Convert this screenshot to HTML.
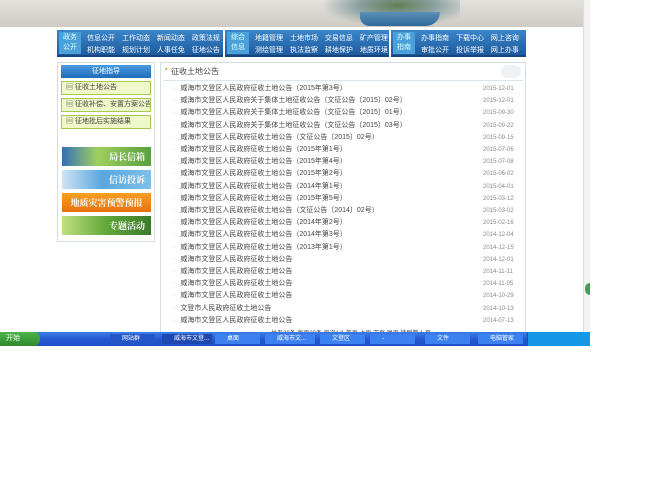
<!DOCTYPE html>
<html><head><meta charset="utf-8"><style>
*{margin:0;padding:0;box-sizing:border-box}
body{width:656px;height:492px;background:#fff;position:relative;overflow:hidden;font-family:"Liberation Sans","Noto Sans CJK SC",sans-serif;font-size:7px;color:#444}
.abs{position:absolute}
.banner{left:0;top:0;width:583px;height:27px;background:linear-gradient(#e4e2de,#cfcbc4)}
.nav{top:30px;height:27px;background:linear-gradient(#3b86c9,#1d5a9e);border-bottom:2px solid #17457a}
.nav .h{position:absolute;left:2px;top:2px;width:22px;height:22px;background:#4aa0d8;color:#dff;font-size:7px;line-height:10px;text-align:center;padding-top:1px}
.nav .l{position:absolute;left:30px;color:#fff;font-size:7px;white-space:nowrap;word-spacing:5px}
.side{left:57px;top:62px;width:98px;height:180px;border:1px solid #d6dde4}
.st{position:absolute;left:3px;top:2px;width:90px;height:13px;background:linear-gradient(#4a9be0,#1f6cb8);color:#fff;text-align:center;line-height:13px}
.gi{position:absolute;left:3px;width:90px;height:14px;background:#eef8c8;border:1px solid #a8c850;line-height:12px;padding-left:4px;white-space:nowrap;overflow:hidden}
.bn{position:absolute;left:4px;width:89px;height:19px;color:#fff;font-weight:bold;font-size:9px;line-height:19px;text-align:right;padding-right:6px;font-family:"Noto Serif CJK SC",serif}
.main{left:160px;top:62px;width:366px;height:270px;border:1px solid #d6dde4;border-bottom:none}
.row{position:absolute;left:12px;width:350px;height:12px;line-height:12px;white-space:nowrap}
.row i{font-style:normal;color:#999;margin-right:5px}
.row b{font-weight:normal;position:absolute;left:310px;color:#888;font-size:6px}
.tb{left:0;top:332px;width:590px;height:14px;background:linear-gradient(#3d7ee6,#2459d2 50%,#1d4fc8)}
.tk{position:absolute;top:2px;height:10px;background:#3c81f0;color:#fff;font-size:6px;line-height:10px;padding-left:12px;border-radius:1px}
</style></head><body>
<div class="abs banner"></div>
<div class="abs" style="left:320px;top:0;width:140px;height:27px;background:radial-gradient(ellipse at 55% 20%,#5f7f55 0,#8aa0a0 35%,rgba(200,196,190,0) 70%)"></div>
<div class="abs" style="left:360px;top:12px;width:80px;height:14px;border-radius:0 0 60px 40px;background:linear-gradient(#5a8fb8,#2f6a9a)"></div>
<div class="abs" style="left:583px;top:0;width:7px;height:332px;background:#f3f3f3;border-left:1px solid #ddd"></div>
<div class="abs" style="left:585px;top:283px;width:5px;height:12px;background:#4b9a58;border-radius:5px 0 0 5px"></div>

<div class="abs nav" style="left:57px;width:166px"><div class="h">政务<br>公开</div>
<div class="l" style="top:3px">信息公开 工作动态 新闻动态 政策法规</div><div class="l" style="top:15px">机构职能 规划计划 人事任免 征地公告</div></div>
<div class="abs nav" style="left:225px;width:164px"><div class="h">综合<br>信息</div>
<div class="l" style="top:3px">地籍管理 土地市场 交易信息 矿产管理</div><div class="l" style="top:15px">测绘管理 执法监察 耕地保护 地质环境</div></div>
<div class="abs nav" style="left:391px;width:135px"><div class="h">办事<br>指南</div>
<div class="l" style="top:3px">办事指南 下载中心 网上咨询</div><div class="l" style="top:15px">审批公开 投诉举报 网上办事</div></div>

<div class="abs side">
<div class="st">征地指导</div>
<div class="gi" style="top:18px">▤ 征收土地公告</div>
<div class="gi" style="top:35px">▤ 征收补偿、安置方案公告</div>
<div class="gi" style="top:52px">▤ 征地批后实施结果</div>
<div class="bn" style="top:84px;background:linear-gradient(90deg,#3570b8 0,#9fcf60 40%,#5aa040)">局长信箱</div>
<div class="bn" style="top:107px;background:linear-gradient(90deg,#cfe4f4 0,#5aa6e0 45%,#7ec0ea)">信访投诉</div>
<div class="bn" style="top:130px;background:linear-gradient(#f7a020,#e8700c);text-align:center;padding:0">地质灾害预警预报</div>
<div class="bn" style="top:153px;background:linear-gradient(90deg,#c0e080 0,#60a838 50%,#3c7a2a)">专题活动</div>
</div>

<div class="abs main">
<div class="abs" style="left:4px;top:3px;color:#f08000">▪</div>
<div class="abs" style="left:10px;top:3px;font-size:8px">征收土地公告</div>
<div class="abs" style="left:340px;top:2px;width:20px;height:13px;border-radius:8px;background:#eef2f5"></div>
<div class="abs" style="left:2px;top:17px;width:360px;height:1px;background:#dde4ea"></div>
<div id="rows"></div>
<div class="abs" style="left:110px;top:265px;font-size:6px;white-space:nowrap">共有20条 每页20条 页次1/1 首页 上页 下页 尾页 转到第 1 页</div>
</div>

<div class="abs tb">
<div class="abs" style="left:0;top:0;width:40px;height:14px;background:linear-gradient(#4db34a,#2e8a2c);border-radius:0 6px 6px 0;color:#fff;font-size:7px;line-height:14px;padding-left:6px">开始</div>
<div class="tk" style="left:110px;width:45px;background:#2456c8">网站群</div>
<div class="tk" style="left:162px;width:50px;background:#1e48b0">威海市文登...</div>
<div class="tk" style="left:215px;width:45px">桌面</div>
<div class="tk" style="left:265px;width:50px">威海市文...</div>
<div class="tk" style="left:320px;width:45px">文登区</div>
<div class="tk" style="left:370px;width:45px">-</div>
<div class="tk" style="left:425px;width:45px">文件</div>
<div class="tk" style="left:478px;width:45px">电脑管家</div>
<div class="abs" style="left:527px;top:0;width:63px;height:14px;background:#1597e8;border-left:1px solid #0c5ab8"></div>
</div>
<script>
var t=["威海市文登区人民政府征收土地公告（2015年第3号）","威海市文登区人民政府关于集体土地征收公告（文征公告〔2015〕02号）","威海市文登区人民政府关于集体土地征收公告（文征公告〔2015〕01号）","威海市文登区人民政府关于集体土地征收公告（文征公告〔2015〕03号）","威海市文登区人民政府征收土地公告（文征公告〔2015〕02号）","威海市文登区人民政府征收土地公告（2015年第1号）","威海市文登区人民政府征收土地公告（2015年第4号）","威海市文登区人民政府征收土地公告（2015年第2号）","威海市文登区人民政府征收土地公告（2014年第1号）","威海市文登区人民政府征收土地公告（2015年第5号）","威海市文登区人民政府征收土地公告（文征公告〔2014〕02号）","威海市文登区人民政府征收土地公告（2014年第2号）","威海市文登区人民政府征收土地公告（2014年第3号）","威海市文登区人民政府征收土地公告（2013年第1号）","威海市文登区人民政府征收土地公告","威海市文登区人民政府征收土地公告","威海市文登区人民政府征收土地公告","威海市文登区人民政府征收土地公告","文登市人民政府征收土地公告","威海市文登区人民政府征收土地公告"];
var d=["2015-12-01","2015-12-01","2015-09-30","2015-09-22","2015-09-15","2015-07-06","2015-07-08","2015-06-02","2015-04-01","2015-03-12","2015-03-02","2015-02-16","2014-12-04","2014-12-15","2014-12-01","2014-11-11","2014-11-05","2014-10-29","2014-10-13","2014-07-13"];
var h="";for(var i=0;i<20;i++)h+='<div class="row" style="top:'+(20+i*12.2)+'px"><i>·</i>'+t[i]+'<b>'+d[i]+'</b></div>';
document.getElementById("rows").innerHTML=h;
</script>
</body></html>
